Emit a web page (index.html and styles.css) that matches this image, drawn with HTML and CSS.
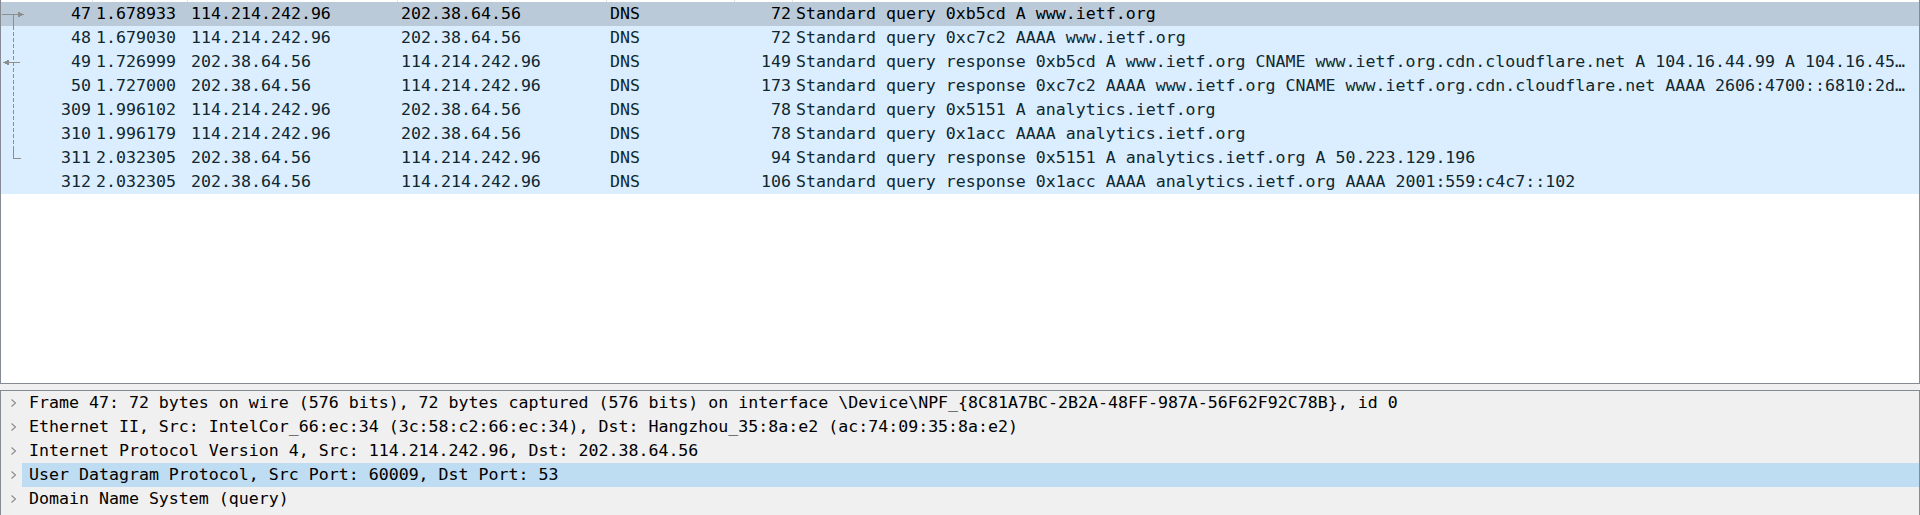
FILE: index.html
```html
<!DOCTYPE html>
<html lang="en">
<head>
<meta charset="utf-8">
<title>Packet list</title>
<link rel="stylesheet" href="styles.css">
</head>
<body>
<div class="app">
  <section class="plist">
    <div class="hdr">
      <span class="hc"></span><span class="hc"></span><span class="hc"></span><span class="hc"></span><span class="hc"></span><span class="hc"></span><span class="hc last"></span>
    </div>
    <div class="rows">
      <svg class="related" width="28" height="192" viewBox="0 0 28 192" shape-rendering="crispEdges">
        <g stroke="#8e8e8e" stroke-width="1" fill="none">
          <line x1="1" y1="12.5" x2="18" y2="12.5"/>
          <line x1="12.5" y1="12" x2="12.5" y2="24"/>
          <line x1="12.5" y1="24" x2="12.5" y2="146" stroke-dasharray="4 2"/>
          <line x1="12.5" y1="146" x2="12.5" y2="157"/>
          <line x1="7" y1="60.5" x2="19" y2="60.5"/>
          <line x1="12.5" y1="156.5" x2="20" y2="156.5"/>
        </g>
        <g fill="#8e8e8e">
          <polygon points="17,9.5 23,12.5 17,15.5"/>
          <polygon points="2,60.5 8,57.5 8,63.5"/>
        </g>
      </svg>
      <div class="row sel"><span class="c r">47</span><span class="c">1.678933</span><span class="c">114.214.242.96</span><span class="c">202.38.64.56</span><span class="c">DNS</span><span class="c r">72</span><span class="c">Standard query 0xb5cd A www.ietf.org</span></div>
      <div class="row"><span class="c r">48</span><span class="c">1.679030</span><span class="c">114.214.242.96</span><span class="c">202.38.64.56</span><span class="c">DNS</span><span class="c r">72</span><span class="c">Standard query 0xc7c2 AAAA www.ietf.org</span></div>
      <div class="row"><span class="c r">49</span><span class="c">1.726999</span><span class="c">202.38.64.56</span><span class="c">114.214.242.96</span><span class="c">DNS</span><span class="c r">149</span><span class="c">Standard query response 0xb5cd A www.ietf.org CNAME www.ietf.org.cdn.cloudflare.net A 104.16.44.99 A 104.16.45…</span></div>
      <div class="row"><span class="c r">50</span><span class="c">1.727000</span><span class="c">202.38.64.56</span><span class="c">114.214.242.96</span><span class="c">DNS</span><span class="c r">173</span><span class="c">Standard query response 0xc7c2 AAAA www.ietf.org CNAME www.ietf.org.cdn.cloudflare.net AAAA 2606:4700::6810:2d…</span></div>
      <div class="row"><span class="c r">309</span><span class="c">1.996102</span><span class="c">114.214.242.96</span><span class="c">202.38.64.56</span><span class="c">DNS</span><span class="c r">78</span><span class="c">Standard query 0x5151 A analytics.ietf.org</span></div>
      <div class="row"><span class="c r">310</span><span class="c">1.996179</span><span class="c">114.214.242.96</span><span class="c">202.38.64.56</span><span class="c">DNS</span><span class="c r">78</span><span class="c">Standard query 0x1acc AAAA analytics.ietf.org</span></div>
      <div class="row"><span class="c r">311</span><span class="c">2.032305</span><span class="c">202.38.64.56</span><span class="c">114.214.242.96</span><span class="c">DNS</span><span class="c r">94</span><span class="c">Standard query response 0x5151 A analytics.ietf.org A 50.223.129.196</span></div>
      <div class="row"><span class="c r">312</span><span class="c">2.032305</span><span class="c">202.38.64.56</span><span class="c">114.214.242.96</span><span class="c">DNS</span><span class="c r">106</span><span class="c">Standard query response 0x1acc AAAA analytics.ietf.org AAAA 2001:559:c4c7::102</span></div>
    </div>
  </section>
  <div class="splitter"></div>
  <section class="details">
    <div class="drow"><span class="branch"><svg width="21" height="24" viewBox="0 0 21 24"><polyline points="10.5,8.5 14.5,12 10.5,15.5" fill="none" stroke="#8a8a8a" stroke-width="1.1"/></svg></span><span class="item">Frame 47: 72 bytes on wire (576 bits), 72 bytes captured (576 bits) on interface \Device\NPF_{8C81A7BC-2B2A-48FF-987A-56F62F92C78B}, id 0</span></div>
    <div class="drow"><span class="branch"><svg width="21" height="24" viewBox="0 0 21 24"><polyline points="10.5,8.5 14.5,12 10.5,15.5" fill="none" stroke="#8a8a8a" stroke-width="1.1"/></svg></span><span class="item">Ethernet II, Src: IntelCor_66:ec:34 (3c:58:c2:66:ec:34), Dst: Hangzhou_35:8a:e2 (ac:74:09:35:8a:e2)</span></div>
    <div class="drow"><span class="branch"><svg width="21" height="24" viewBox="0 0 21 24"><polyline points="10.5,8.5 14.5,12 10.5,15.5" fill="none" stroke="#8a8a8a" stroke-width="1.1"/></svg></span><span class="item">Internet Protocol Version 4, Src: 114.214.242.96, Dst: 202.38.64.56</span></div>
    <div class="drow hl"><span class="branch"><svg width="21" height="24" viewBox="0 0 21 24"><polyline points="10.5,8.5 14.5,12 10.5,15.5" fill="none" stroke="#8a8a8a" stroke-width="1.1"/></svg></span><span class="item">User Datagram Protocol, Src Port: 60009, Dst Port: 53</span></div>
    <div class="drow"><span class="branch"><svg width="21" height="24" viewBox="0 0 21 24"><polyline points="10.5,8.5 14.5,12 10.5,15.5" fill="none" stroke="#8a8a8a" stroke-width="1.1"/></svg></span><span class="item">Domain Name System (query)</span></div>
  </section>
</div>
</body>
</html>
```

FILE: styles.css
```css
html, body {
  margin: 0;
  padding: 0;
}

body {
  width: 1920px;
  height: 515px;
  overflow: hidden;
  background: #f0f0f0;
  font-family: "DejaVu Sans Mono", "Liberation Mono", monospace;
  font-size: 16.6px;
  color: #000;
}

.app {
  display: flex;
  flex-direction: column;
  height: 515px;
}

.plist {
  box-sizing: border-box;
  height: 384px;
  flex: none;
  background: #fff;
  border: 1px solid #858a93;
  border-top: none;
}

.hdr,
.row {
  display: grid;
  grid-template-columns: 92px 95px 210px 209px 128px 58px 1fr;
}

.hdr {
  height: 2px;
  background: #fff;
}

.hc {
  border-right: 1px solid #e3e3e3;
}

.hc.last {
  border-right: none;
}

.rows {
  position: relative;
}

.related {
  position: absolute;
  left: 0;
  top: 0;
  z-index: 2;
}

.row {
  height: 24px;
  line-height: 24px;
  background: #daeeff;
  color: #12272e;
  white-space: nowrap;
}

.row.sel {
  background: #bacad9;
  color: #000;
}

.c {
  overflow: hidden;
  padding: 0 3px;
}

.c.r {
  text-align: right;
  padding-right: 2px;
}

.splitter {
  height: 6px;
  flex: none;
}

.details {
  flex: 1;
  box-sizing: border-box;
  background: #f0f0f0;
  border: 1px solid #858a93;
  border-bottom: none;
}

.drow {
  display: flex;
  height: 24px;
  line-height: 24px;
  white-space: nowrap;
  color: #000;
}

.branch {
  width: 21px;
  flex: none;
  display: flex;
}

.item {
  flex: 1;
  padding-left: 7px;
  margin-right: 0;
}

.drow.hl .item {
  background: #bedcf2;
}
```
